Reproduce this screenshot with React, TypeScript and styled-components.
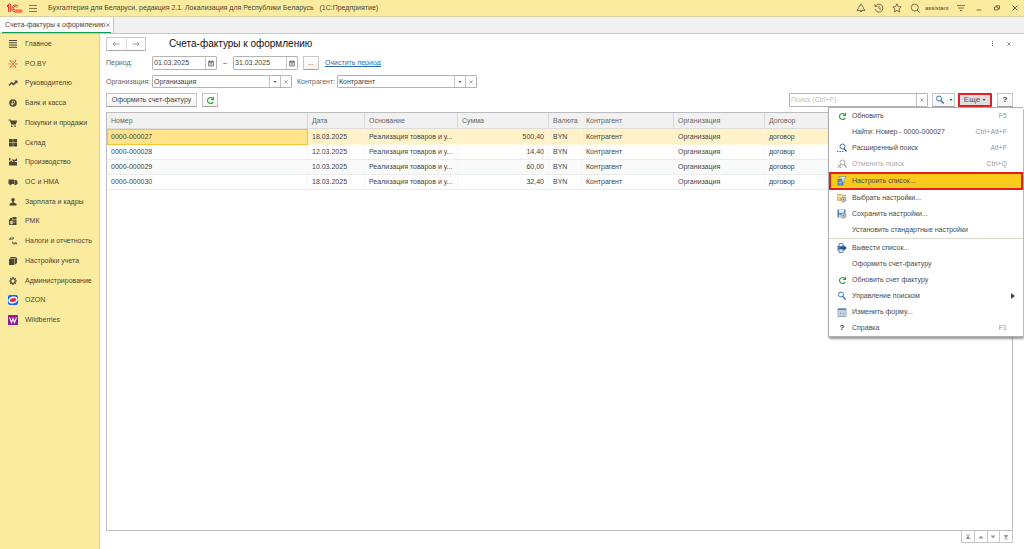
import React from "react";
import styled, { createGlobalStyle, css } from "styled-components";

const GlobalStyle = createGlobalStyle`
  * { box-sizing: border-box; }
  html, body { margin: 0; padding: 0; background: #fff; }
  body, button, input, table {
    font-family: "Liberation Sans", Arial, sans-serif;
    font-size: 7px;
    line-height: 10px;
    color: #444;
  }
  button, input { margin: 0; padding: 0; border: 0; background: none; border-radius: 0; outline: none; }
  svg { display: block; flex: none; }
`;

const Page = styled.div`
  display: flex;
  flex-direction: column;
  height: 100vh;
  overflow: hidden;
`;

const TopBar = styled.header`
  display: flex;
  align-items: center;
  flex: none;
  height: 17px;
  padding-left: 6px;
  background: #fbeb9e;
  border-bottom: 1px solid #d9d2a6;
  color: #4a4535;
`;

const AppTitle = styled.span`
  margin-left: 5px;
  flex: 1;
  white-space: pre;
`;

const IconButton = styled.button`
  display: flex;
  align-items: center;
  justify-content: center;
  width: ${(p: { $w?: number }) => p.$w ?? 18}px;
  height: 14px;
  color: #5a543e;
`;

const UserName = styled.span`
  width: 28px;
  padding-left: 1px;
  font-size: 6px;
  white-space: nowrap;
`;

const TabBar = styled.nav`
  display: flex;
  flex: none;
  height: 17px;
  background: #f1f1f1;
  border-bottom: 1px solid #c6c6c6;
`;

const Tab = styled.div`
  display: flex;
  align-items: center;
  width: 114px;
  padding: 0 2px;
  background: #fff;
  border-right: 1px solid #c6c6c6;
`;

const TabInner = styled.div`
  display: flex;
  align-items: center;
  justify-content: space-between;
  flex: 1;
  height: 15px;
  padding: 0 1px 0 3px;
  border-bottom: 1px solid #109a55;
  white-space: nowrap;
`;

const Body = styled.div`
  display: flex;
  flex: 1;
  min-height: 0;
`;

const Sidebar = styled.aside`
  flex: none;
  width: 100px;
  background: #fbeb9e;
  border-right: 1px solid #d5cfae;
`;

const SideList = styled.ul`
  display: grid;
  grid-auto-rows: 1fr;
  height: 296px;
  margin: 0;
  padding: 0;
  list-style: none;
`;

const SideLink = styled.a`
  display: flex;
  align-items: center;
  gap: 7px;
  height: 100%;
  padding-left: 8px;
  color: #4a4535;
  text-decoration: none;
  white-space: nowrap;
`;

const Main = styled.main`
  display: flex;
  flex-direction: column;
  gap: 5px;
  flex: 1;
  min-width: 0;
  padding: 3px 11px 6px 6px;
`;

const Row = styled.div`
  display: flex;
  align-items: stretch;
  flex: none;
  height: ${(p: { $h?: number }) => p.$h ?? 14}px;
`;

const Spacer = styled.div`
  flex: 1;
`;

const NavGroup = styled.div`
  display: flex;
  width: 40px;
  border: 1px solid #c9c9c9;
  border-bottom-color: #aaa;
  border-radius: 1px;
`;

const NavButton = styled.button`
  display: flex;
  flex: 1;
  align-items: center;
  justify-content: center;
  color: #888;
  & + & { border-left: 1px solid #ddd; }
`;

const Title = styled.h1`
  margin: 0 0 0 23px;
  font-size: 10px;
  line-height: 14px;
  font-weight: 400;
  color: #111;
  white-space: nowrap;
`;

const Label = styled.label`
  display: flex;
  align-items: center;
  width: ${(p: { $w: number }) => p.$w}px;
  color: #666;
  white-space: nowrap;
`;

const ContractorLabel = styled(Label)`
  padding-left: 5px;
`;

const Field = styled.div`
  display: flex;
  width: ${(p: { $w: number }) => p.$w}px;
  border: 1px solid #b4b4b4;
  border-radius: 1px;
`;

const FieldInput = styled.input`
  flex: 1;
  width: 0;
  min-width: 0;
  padding-left: 1px;
  background: #fff;
  &::placeholder { color: #b8bfb8; opacity: 1; }
`;

const FieldButton = styled.button`
  display: flex;
  align-items: center;
  justify-content: center;
  width: 11px;
  border-left: 1px solid #c2c2c2;
  color: #777;
`;

const Dash = styled.span`
  width: 16px;
  line-height: 14px;
  text-align: center;
`;

const Button = styled.button<{ $w: number; $ml?: number }>`
  display: flex;
  align-items: center;
  justify-content: center;
  gap: 4px;
  width: ${(p) => p.$w}px;
  margin-left: ${(p) => p.$ml ?? 0}px;
  background: linear-gradient(#fff, #f4f4f4);
  border: 1px solid #c6c6c6;
  border-bottom-color: #a2a2a2;
  border-radius: 1px;
  white-space: nowrap;
`;

const MoreButton = styled(Button)`
  height: 14px;
  gap: 2px;
  background: #dedede;
  border: 2px solid #e81c23;
  color: #555;
  font-size: 8px;
`;

const Link = styled.a`
  margin-left: 6px;
  line-height: 14px;
  color: #2a6fb8;
  white-space: nowrap;
`;

const ListArea = styled.section`
  display: flex;
  flex-direction: column;
  flex: 1;
  min-height: 0;
`;

const TableFrame = styled.div`
  flex: 1;
  min-height: 0;
  overflow: hidden;
  border: 1px solid #bdbdbd;
`;

const Table = styled.table`
  width: 100%;
  table-layout: fixed;
  border-collapse: separate;
  border-spacing: 0;
  th, td {
    padding: 0 4px;
    overflow: hidden;
    white-space: nowrap;
    text-align: left;
    font-weight: 400;
  }
  th {
    height: 16px;
    background: #f1f1f1;
    border-bottom: 1px solid #dcdcdc;
    border-right: 1px solid #d8d8d8;
    color: #666;
  }
  th:nth-child(5), th:last-child { border-right-color: #f1f1f1; }
`;

const DataRow = styled.tr<{ $selected: boolean; $even: boolean }>`
  td {
    height: 15px;
    border-bottom: 1px solid #ececec;
    border-right: 1px solid #f5f5f5;
    background: ${(p) => (p.$even ? "#f9fbfa" : "#fff")};
  }
  td:nth-child(4) { text-align: right; }
  ${(p) =>
    p.$selected &&
    css`
      td { height: 16px; background: #fff2c8; border-color: #fff7dc; }
      td:first-child { background: #ffe48c; border: 1px solid #f3c632; padding-left: 3px; }
    `}
`;

const Pager = styled.div`
  display: flex;
  align-self: flex-end;
  flex: none;
  width: 52px;
  height: 12px;
  border: 1px solid #c8c8c8;
  border-top: 0;
`;

const PagerButton = styled.button`
  display: flex;
  align-items: center;
  justify-content: center;
  flex: 1;
  color: #999;
  & + & { border-left: 1px solid #c8c8c8; }
`;

const MenuAnchor = styled.div`
  position: relative;
  margin-left: 3px;
`;

const Menu = styled.div`
  position: absolute;
  z-index: 2;
  top: 14px;
  right: -31px;
  width: 195px;
  background: #fff;
  border: 1px solid #b0b0b0;
  border-right: 0;
  box-shadow: 1px 2px 2px rgba(0, 0, 0, 0.4);
`;

const MenuItem = styled.button<{ $marked?: boolean; $disabled?: boolean }>`
  display: flex;
  align-items: center;
  width: 100%;
  height: 16px;
  padding: 0 16px 0 8px;
  color: ${(p) => (p.$disabled ? "#aaa" : "#4a4a4a")};
  white-space: nowrap;
  ${(p) =>
    p.$marked &&
    css`
      height: 18px;
      padding: 0 14px 0 6px;
      background: #fbcb1c;
      border: 2px solid #e0201c;
    `}
`;

const MenuIcon = styled.span`
  display: flex;
  align-items: center;
  justify-content: center;
  width: 10px;
  margin-right: 5px;
`;

const MenuText = styled.span`
  flex: 1;
  text-align: left;
`;

const Shortcut = styled.span`
  color: #999;
`;

const SubArrow = styled.span`
  display: flex;
  width: 4px;
  margin-right: -8px;
`;

const MenuRule = styled.hr`
  height: 2px;
  margin: 0;
  border: 0;
  border-top: 1px solid #d9d8cf;
`;

const HelpMark = styled.b`
  font-size: 8px;
  color: #333;
`;

type SvgProps = { size?: number; box?: number; children: React.ReactNode };
const Line = ({ size = 10, box = 20, children }: SvgProps) => (
  <svg width={size} height={size} viewBox={`0 0 ${box} ${box}`} fill="none" stroke="currentColor" strokeWidth="1.6">
    {children}
  </svg>
);
const Solid = ({ size = 10, box = 20, children }: SvgProps) => (
  <svg width={size} height={size} viewBox={`0 0 ${box} ${box}`} fill="#4b473c">
    {children}
  </svg>
);

const Logo = () => (
  <svg width="17" height="11" viewBox="0 0 51 33" fill="none" stroke="#dc2f25" strokeWidth="3">
    <path d="M3 12 L8 7 V15 M8 11 V27" />
    <path d="M3 8 L11 3 H13 V27" />
    <path d="M37 11 A10.500 10.500 0 1 0 28 27 H49" />
    <path d="M32 13 A5.500 5.500 0 1 0 28 21.500 H49" />
  </svg>
);

const Cross = ({ size = 5 }: { size?: number }) => (
  <Line size={size} box={10}><path d="M1 1 L9 9 M9 1 L1 9" /></Line>
);
const Caret = () => (
  <svg width="4" height="2" viewBox="0 0 8 4"><path d="M1 0 H7 L4 4Z" fill="#555" /></svg>
);
const Calendar = () => (
  <svg width="6" height="7" viewBox="0 0 12 14" fill="none" stroke="#666" strokeWidth="1.4">
    <path d="M1 3 H11 V12 H1Z M3.500 0 V3 M8.500 0 V3 M3 7.500 H9 M3 10 H9" />
    <path d="M1 4 H11" strokeWidth="2.600" />
  </svg>
);
const Refresh = () => (
  <svg width="9" height="9" viewBox="0 0 18 18" fill="none" stroke="#2fa136" strokeWidth="2.4">
    <path d="M13 4.500 A6 6 0 1 0 14.500 11.500" />
    <path d="M16 1 V8 H9Z" fill="#2fa136" stroke="none" />
  </svg>
);
const Lens = ({ color = "#3576b9", mark }: { color?: string; mark?: "dots" | "cross" }) => (
  <svg width="10" height="10" viewBox="0 0 20 20" fill="none" stroke={color} strokeWidth="2">
    <circle cx={mark ? 11 : 8} cy="7" r="5" />
    <path d={mark ? "M14 11 L19 17" : "M11.500 11 L17.500 17"} strokeWidth="2.800" />
    {mark === "dots" && <path d="M0 17 H3 M5 17 H8 M10 17 H13" />}
    {mark === "cross" && <path d="M2 11 L8 18 M8 11 L2 18" stroke="#999" />}
  </svg>
);
const FilterList = () => (
  <svg width="10" height="10" viewBox="0 0 20 20">
    <path d="M1 6 H13 V19 H1Z" fill="#3d77b0" />
    <path d="M3 10 H10 M3 13 H10 M3 16 H10" stroke="#b8d5ec" strokeWidth="1.400" />
    <path d="M3 1 H19 L14 7 V14 L10 11 V7Z" fill="#dfe6ea" stroke="#58728a" />
  </svg>
);
const Gear = ({ x, y }: { x: number; y: number }) => (
  <g fill="#eee" stroke="#777">
    <circle cx={x} cy={y} r="5" strokeWidth="2" strokeDasharray="2.400 1" />
    <circle cx={x} cy={y} r="3.800" />
    <circle cx={x} cy={y} r="1.400" fill="#777" />
  </g>
);
const FolderGear = () => (
  <svg width="10" height="10" viewBox="0 0 20 20">
    <path d="M1 2 H7 L9 4 H17 V15 H1Z" fill="#f0cd69" stroke="#c89b32" />
    <path d="M1 7 H17" stroke="#fff0b8" strokeWidth="2" />
    <Gear x={13} y={13} />
  </svg>
);
const DiskGear = () => (
  <svg width="10" height="10" viewBox="0 0 20 20">
    <path d="M1 1 H17 V17 H1Z" fill="#4d80b5" />
    <path d="M4 1 H14 V8 H4Z M4 11 H10 V17 H4Z" fill="#e4edf5" />
    <Gear x={13} y={13} />
  </svg>
);
const Export = () => (
  <svg width="10" height="10" viewBox="0 0 20 20">
    <path d="M1 5 H14 V15 H1Z" fill="#4d80b5" />
    <path d="M4 1 H12 V7 H4Z M4 12 H12 V19 H4Z" fill="#dce8f3" stroke="#3e6e9d" strokeWidth="1.400" />
    <path d="M7 8 H13 V4.500 L20 10 L13 15.500 V12 H7Z" fill="#24548a" />
  </svg>
);
const FormGrid = () => (
  <svg width="10" height="9" viewBox="0 0 20 18">
    <path d="M2 1 H18 V17 H2Z" fill="#dfe8f1" stroke="#7d95ad" strokeWidth="1.600" />
    <path d="M2 3 H18" stroke="#5289c2" strokeWidth="3" />
    <path d="M5 8 H9 M11 8 H15 M5 11 H9 M11 11 H15 M5 14 H9 M11 14 H15" stroke="#7790aa" strokeWidth="1.600" />
  </svg>
);
const Help = () => <HelpMark>?</HelpMark>;

const sections: { label: string; icon: React.ReactNode }[] = [
  { label: "Главное", icon: <Solid><path d="M2 2h16v2H2zM2 6.500h16v2H2zM2 11h16v2H2zM2 15.500h16v2H2z" /></Solid> },
  {
    label: "PO.BY",
    icon: (
      <svg width="10" height="10" viewBox="0 0 20 20" fill="none" stroke="#e0583c" strokeWidth="1.600">
        <path d="M10 3 V7 M10 13 V17 M1 10 H6 M14 10 H19 M5 4 L8 8 M15 4 L12 8 M5 16 L8 12 M15 16 L12 12" />
        <circle cx="10" cy="10" r="1.500" fill="#e0583c" />
        <circle cx="5" cy="3.500" r="1" /><circle cx="15" cy="3.500" r="1" /><circle cx="5" cy="16.500" r="1" /><circle cx="15" cy="16.500" r="1" />
      </svg>
    ),
  },
  {
    label: "Руководителю",
    icon: <Solid><path d="M1 14 L7 7.500 L11 10.500 L14.500 7 L12.500 5 H19 V11.500 L17 9.500 L11 15 L7 11.500 L3 16Z" /></Solid>,
  },
  {
    label: "Банк и касса",
    icon: (
      <Solid>
        <circle cx="10" cy="10" r="7.500" />
        <path d="M8.500 15 V6 H11 A2.500 2.500 0 0 1 11 11 H6.500 M6.500 13 H11" fill="none" stroke="#fbeb9e" strokeWidth="1.400" />
      </Solid>
    ),
  },
  {
    label: "Покупки и продажи",
    icon: (
      <Solid>
        <path d="M1 3 H5 L6 5 H18.500 L16 12 H6 L4 5 H1Z M6 13 H16 V14.500 H6Z" />
        <circle cx="7.500" cy="16.500" r="1.700" /><circle cx="14" cy="16.500" r="1.700" />
      </Solid>
    ),
  },
  { label: "Склад", icon: <Solid><path d="M2 2h7.500v7H2zM10.500 2H18v7h-7.500zM2 10h7.500v7H2zM10.500 10H18v7h-7.500z" /></Solid> },
  { label: "Производство", icon: <Solid><path d="M2 17 V10 L8 7 V10 L13 7 V10 H18 V17Z M2 2 H5 V6 L2 8Z M8 4 L14 6 L18 2 V8 H10Z" /></Solid> },
  {
    label: "ОС и НМА",
    icon: (
      <Solid>
        <path d="M1 5 H12 V14 H1Z M13 6 H17 L19 10 V14 H13Z" />
        <circle cx="5" cy="14.500" r="2.200" /><circle cx="15" cy="14.500" r="2.200" />
      </Solid>
    ),
  },
  { label: "Зарплата и кадры", icon: <Solid><circle cx="10" cy="5.500" r="3.500" /><path d="M8.500 8 H11.500 V11 L17 13.500 V17 H3 V13.500 L8.500 11Z" /></Solid> },
  {
    label: "РМК",
    icon: (
      <Solid>
        <path d="M2 7 H17 V18 H2Z M9 2 H17 V6 H9Z M4 4 H8 V7 H4Z" />
        <path d="M5 10 H9 V16 H5Z M11 10 H14 M11 13 H14" fill="#c9be87" stroke="#fbeb9e" />
      </Solid>
    ),
  },
  {
    label: "Налоги и отчетность",
    icon: (
      <Line><path d="M2 8 L5 3 L6 8 M8 8 V3 L11 3 V6 H8 M3 6 H6 M9 11 V15 H12 M12 12 V17 M13 17 L15 12 L18 17 M14 15 H18" strokeWidth="1.300" /></Line>
    ),
  },
  { label: "Настройки учета", icon: <Solid><path d="M2 6 H13 V18 H2Z M3 5 L6 2 H17 L14 5Z M14 6 L18 3 V14 L14 17Z" /></Solid> },
  {
    label: "Администрирование",
    icon: (
      <Line>
        <circle cx="10" cy="10" r="4.500" strokeWidth="2.400" />
        <path d="M10 2 V5 M10 15 V18 M2 10 H5 M15 10 H18 M4.500 4.500 L6.500 6.500 M15.500 4.500 L13.500 6.500 M4.500 15.500 L6.500 13.500 M15.500 15.500 L13.500 13.500" strokeWidth="2.400" />
      </Line>
    ),
  },
  {
    label: "OZON",
    icon: (
      <svg width="10" height="10" viewBox="0 0 20 20">
        <rect width="20" height="20" rx="4" fill="#1266f1" />
        <ellipse cx="10" cy="10" rx="9.500" ry="7" fill="#fff" transform="rotate(-14 10 10)" />
        <ellipse cx="10" cy="10" rx="6.500" ry="3.800" fill="#f0244f" transform="rotate(-14 10 10)" />
      </svg>
    ),
  },
  {
    label: "Wildberries",
    icon: (
      <svg width="10" height="10" viewBox="0 0 20 20">
        <rect width="20" height="20" rx="1" fill="#8f1c96" />
        <path d="M3 5 L7 15 L10 7 L13 15 L17 5" fill="none" stroke="#fff" strokeWidth="2.200" />
      </svg>
    ),
  },
];

const columns = ["Номер", "Дата", "Основание", "Сумма", "Валюта", "Контрагент", "Организация", "Договор"];
const columnWidths = [201, 57, 93, 91, 33, 92, 91];

const invoices = [
  ["0000-000027", "18.03.2025", "500,40"],
  ["0000-000028", "12.03.2025", "14,40"],
  ["0000-000029", "10.03.2025", "60,00"],
  ["0000-000030", "18.03.2025", "32,40"],
];

type Entry = { text: string; keys?: string; icon?: React.ReactNode; marked?: boolean; off?: boolean; sub?: boolean };
const menuTop: Entry[] = [
  { text: "Обновить", keys: "F5", icon: <Refresh /> },
  { text: "Найти: Номер - 0000-000027", keys: "Ctrl+Alt+F" },
  { text: "Расширенный поиск", keys: "Alt+F", icon: <Lens mark="dots" /> },
  { text: "Отменить поиск", keys: "Ctrl+Q", icon: <Lens color="#aaa" mark="cross" />, off: true },
  { text: "Настроить список...", icon: <FilterList />, marked: true },
  { text: "Выбрать настройки...", icon: <FolderGear /> },
  { text: "Сохранить настройки...", icon: <DiskGear /> },
  { text: "Установить стандартные настройки" },
];
const menuBottom: Entry[] = [
  { text: "Вывести список...", icon: <Export /> },
  { text: "Оформить счет-фактуру" },
  { text: "Обновить счет фактуру", icon: <Refresh /> },
  { text: "Управление поиском", icon: <Lens />, sub: true },
  { text: "Изменить форму...", icon: <FormGrid /> },
  { text: "Справка", keys: "F1", icon: <Help /> },
];

const MenuEntries = ({ items }: { items: Entry[] }) => (
  <>
    {items.map((m) => (
      <MenuItem key={m.text} role="menuitem" $marked={m.marked} $disabled={m.off} disabled={m.off}>
        <MenuIcon>{m.icon}</MenuIcon>
        <MenuText>{m.text}</MenuText>
        {m.keys && <Shortcut>{m.keys}</Shortcut>}
        {m.sub && (
          <SubArrow><svg width="4" height="6" viewBox="0 0 4 6"><path d="M0 0 L4 3 L0 6Z" fill="#444" /></svg></SubArrow>
        )}
      </MenuItem>
    ))}
  </>
);

const DateField = ({ id, value, label }: { id: string; value: string; label?: string }) => (
  <Field $w={65}>
    <FieldInput id={id} defaultValue={value} aria-label={label} />
    <FieldButton aria-label="Календарь"><Calendar /></FieldButton>
  </Field>
);

const PickField = ({ id, value }: { id: string; value: string }) => (
  <Field $w={140}>
    <FieldInput id={id} defaultValue={value} />
    <FieldButton aria-label="Выбрать"><Caret /></FieldButton>
    <FieldButton aria-label="Очистить"><Cross size={4} /></FieldButton>
  </Field>
);

export default function App() {
  return (
    <Page>
      <GlobalStyle />
      <TopBar>
        <Logo />
        <IconButton $w={20} aria-label="Меню">
          <svg width="8" height="8" viewBox="0 0 8 8"><path d="M0 1h8v1H0zM0 4h8v1H0zM0 7h8v1H0z" fill="#7d7657" /></svg>
        </IconButton>
        <AppTitle>{"Бухгалтерия для Беларуси, редакция 2.1. Локализация для Республики Беларусь   (1С:Предприятие)"}</AppTitle>
        <IconButton aria-label="Уведомления">
          <Line><path d="M2 15 H18 C14 12 15 4 10 4 C5 4 6 12 2 15Z M8 17 H12 M10 1 V4" /></Line>
        </IconButton>
        <IconButton aria-label="История">
          <Line><path d="M3 6 A8 8 0 1 1 2 12 M2 2 V7 H7 M10 5 V11 L14 13" /></Line>
        </IconButton>
        <IconButton aria-label="Избранное">
          <Line><path d="M10 1.500 L12.600 7.200 L18.500 7.900 L14 12 L15.300 18 L10 15 L4.700 18 L6 12 L1.500 7.900 L7.400 7.200Z" /></Line>
        </IconButton>
        <IconButton aria-label="Поиск">
          <Line><circle cx="9.500" cy="9" r="7" /><path d="M14 14 L19 19" /></Line>
        </IconButton>
        <UserName>assistant</UserName>
        <IconButton aria-label="Параметры">
          <Line><path d="M2 5 H18 M4 10 H16" /><path d="M7 14 H13 L10 17Z" fill="currentColor" stroke="none" /></Line>
        </IconButton>
        <IconButton aria-label="Свернуть"><Line size={6} box={12}><path d="M1 10 H11" /></Line></IconButton>
        <IconButton aria-label="Восстановить">
          <Line size={6} box={12}><path d="M1 4 H8 V10 H1Z M4 4 V1.500 H11 V8 H8" /></Line>
        </IconButton>
        <IconButton aria-label="Закрыть"><Cross size={6} /></IconButton>
      </TopBar>
      <TabBar>
        <Tab>
          <TabInner>
            Счета-фактуры к оформлению
            <IconButton $w={5} aria-label="Закрыть вкладку"><Cross size={4} /></IconButton>
          </TabInner>
        </Tab>
      </TabBar>
      <Body>
        <Sidebar>
          <SideList>
            {sections.map((s) => (
              <li key={s.label}><SideLink href="#">{s.icon}{s.label}</SideLink></li>
            ))}
          </SideList>
        </Sidebar>
        <Main>
          <Row>
            <NavGroup>
              <NavButton aria-label="Назад"><Line size={8} box={16}><path d="M15 8 H2 M6 4 L2 8 L6 12" /></Line></NavButton>
              <NavButton aria-label="Вперед"><Line size={8} box={16}><path d="M1 8 H14 M10 4 L14 8 L10 12" /></Line></NavButton>
            </NavGroup>
            <Title>Счета-фактуры к оформлению</Title>
            <Spacer />
            <IconButton $w={24} aria-label="Действия">
              <svg width="2" height="6" viewBox="0 0 2 6" fill="#555"><path d="M0 0h1v1H0zM0 2h1v1H0zM0 4h1v1H0z" /></svg>
            </IconButton>
            <IconButton aria-label="Закрыть форму" $w={8}><Cross size={4} /></IconButton>
          </Row>
          <Row>
            <Label $w={46} htmlFor="from">Период:</Label>
            <DateField id="from" value="01.03.2025" />
            <Dash>–</Dash>
            <DateField id="to" value="31.03.2025" label="Конец периода" />
            <Button $w={16} $ml={5}>...</Button>
            <Link href="#">Очистить период</Link>
          </Row>
          <Row $h={13}>
            <Label $w={46} htmlFor="org">Организация:</Label>
            <PickField id="org" value="Организация" />
            <ContractorLabel $w={45} htmlFor="partner">Контрагент:</ContractorLabel>
            <PickField id="partner" value="Контрагент" />
          </Row>
          <Row>
            <Button $w={91}>Оформить счет-фактуру</Button>
            <Button $w={16} $ml={5} aria-label="Обновить"><Refresh /></Button>
            <Spacer />
            <Field $w={139}>
              <FieldInput placeholder="Поиск (Ctrl+F)" aria-label="Поиск" />
              <FieldButton aria-label="Очистить поиск"><Cross size={4} /></FieldButton>
            </Field>
            <Button $w={23} $ml={4} aria-label="Найти"><Lens /><Caret /></Button>
            <MenuAnchor>
              <MoreButton $w={34} aria-haspopup="menu" aria-expanded>Еще<Caret /></MoreButton>
              <Menu role="menu">
                <MenuEntries items={menuTop} />
                <MenuRule />
                <MenuEntries items={menuBottom} />
              </Menu>
            </MenuAnchor>
            <Button $w={16} $ml={5}><Help /></Button>
          </Row>
          <ListArea>
            <TableFrame>
              <Table>
                <colgroup>
                  {columnWidths.map((w, i) => <col key={i} width={w} />)}
                  <col />
                </colgroup>
                <thead><tr>{columns.map((c) => <th key={c}>{c}</th>)}</tr></thead>
                <tbody>
                  {invoices.map(([number, date, sum], i) => (
                    <DataRow key={number} $selected={i === 0} $even={i === 2}>
                      <td>{number}</td>
                      <td>{date}</td>
                      <td>Реализация товаров и у...</td>
                      <td>{sum}</td>
                      <td>BYN</td>
                      <td>Контрагент</td>
                      <td>Организация</td>
                      <td>договор</td>
                    </DataRow>
                  ))}
                </tbody>
              </Table>
            </TableFrame>
            <Pager>
              <PagerButton aria-label="В начало"><Line size={6} box={12}><path d="M2 2 H10" /><path d="M1 10 L6 3 L11 10Z" fill="currentColor" stroke="none" /></Line></PagerButton>
              <PagerButton aria-label="Вверх"><Line size={6} box={12}><path d="M1 9 L6 3 L11 9Z" fill="currentColor" stroke="none" /></Line></PagerButton>
              <PagerButton aria-label="Вниз"><Line size={6} box={12}><path d="M1 3 L6 9 L11 3Z" fill="currentColor" stroke="none" /></Line></PagerButton>
              <PagerButton aria-label="В конец"><Line size={6} box={12}><path d="M2 10 H10" /><path d="M1 2 L6 9 L11 2Z" fill="currentColor" stroke="none" /></Line></PagerButton>
            </Pager>
          </ListArea>
        </Main>
      </Body>
    </Page>
  );
}
